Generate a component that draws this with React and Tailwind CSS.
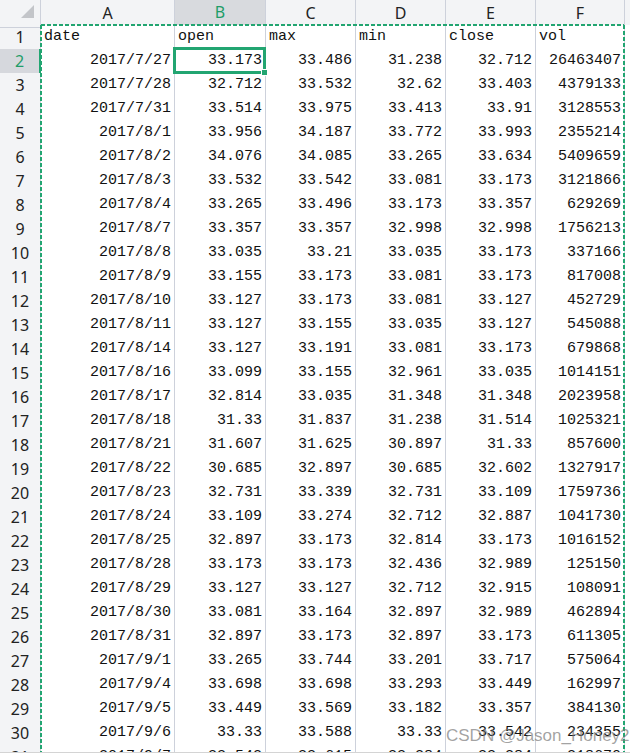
import React from "react";

const columns = ["A", "B", "C", "D", "E", "F"];

const header = ["date", "open", "max", "min", "close", "vol"];

const rows = [
  ["2017/7/27", "33.173", "33.486", "31.238", "32.712", "26463407"],
  ["2017/7/28", "32.712", "33.532", "32.62", "33.403", "4379133"],
  ["2017/7/31", "33.514", "33.975", "33.413", "33.91", "3128553"],
  ["2017/8/1", "33.956", "34.187", "33.772", "33.993", "2355214"],
  ["2017/8/2", "34.076", "34.085", "33.265", "33.634", "5409659"],
  ["2017/8/3", "33.532", "33.542", "33.081", "33.173", "3121866"],
  ["2017/8/4", "33.265", "33.496", "33.173", "33.357", "629269"],
  ["2017/8/7", "33.357", "33.357", "32.998", "32.998", "1756213"],
  ["2017/8/8", "33.035", "33.21", "33.035", "33.173", "337166"],
  ["2017/8/9", "33.155", "33.173", "33.081", "33.173", "817008"],
  ["2017/8/10", "33.127", "33.173", "33.081", "33.127", "452729"],
  ["2017/8/11", "33.127", "33.155", "33.035", "33.127", "545088"],
  ["2017/8/14", "33.127", "33.191", "33.081", "33.173", "679868"],
  ["2017/8/16", "33.099", "33.155", "32.961", "33.035", "1014151"],
  ["2017/8/17", "32.814", "33.035", "31.348", "31.348", "2023958"],
  ["2017/8/18", "31.33", "31.837", "31.238", "31.514", "1025321"],
  ["2017/8/21", "31.607", "31.625", "30.897", "31.33", "857600"],
  ["2017/8/22", "30.685", "32.897", "30.685", "32.602", "1327917"],
  ["2017/8/23", "32.731", "33.339", "32.731", "33.109", "1759736"],
  ["2017/8/24", "33.109", "33.274", "32.712", "32.887", "1041730"],
  ["2017/8/25", "32.897", "33.173", "32.814", "33.173", "1016152"],
  ["2017/8/28", "33.173", "33.173", "32.436", "32.989", "125150"],
  ["2017/8/29", "33.127", "33.127", "32.712", "32.915", "108091"],
  ["2017/8/30", "33.081", "33.164", "32.897", "32.989", "462894"],
  ["2017/8/31", "32.897", "33.173", "32.897", "33.173", "611305"],
  ["2017/9/1", "33.265", "33.744", "33.201", "33.717", "575064"],
  ["2017/9/4", "33.698", "33.698", "33.293", "33.449", "162997"],
  ["2017/9/5", "33.449", "33.569", "33.182", "33.357", "384130"],
  ["2017/9/6", "33.33", "33.588", "33.33", "33.542", "234355"],
  ["2017/9/7", "33.542", "33.615", "33.284", "33.284", "218670"],
];

const gridCols =
  "grid grid-cols-[41px_134px_91px_90px_90px_90px_89px_1fr]";

const headFont = { fontFamily: '"Noto Sans", "Liberation Sans", sans-serif' };
const cellFont = { fontFamily: '"Liberation Mono", monospace' };

function ColumnHeader() {
  return (
    <div className={`${gridCols} h-[25px]`} style={headFont}>
      <div className="relative border-r border-b border-[#cdd1db] bg-[#f3f4f6]">
        {/* select-all corner */}
        <svg
          className="absolute left-[21px] top-[5px]"
          width="13"
          height="13"
          viewBox="0 0 13 13"
        >
          <polygon points="13,0 13,13 0,13" fill="#c3c5c9" />
        </svg>
      </div>
      {columns.map((col) => (
        <div
          key={col}
          className={
            col === "B"
              ? "flex items-center justify-center pb-[2px] text-[16px] border-r border-[#cdd1db] border-b-2 border-b-[#22a571] bg-[#d8dade] text-[#1f9d68]"
              : "flex items-center justify-center pb-[2px] text-[16px] border-r border-b border-[#cdd1db] bg-[#f3f4f6] text-[#222]"
          }
        >
          {col}
        </div>
      ))}
      <div className="border-b border-[#cdd1db] bg-[#f3f4f6]" />
    </div>
  );
}

function Row({ index, values, isHeader }) {
  const active = index === 2;

  return (
    <div className={`${gridCols} h-[24px]`}>
      <div
        style={headFont}
        className={
          active
            ? "flex items-center justify-center text-[16px] border-b border-[#cdd1db] border-r-2 border-r-[#22a571] bg-[#d6d8dd] text-[#1f9d68]"
            : "flex items-center justify-center text-[16px] border-r border-b border-[#cdd1db] bg-[#f3f4f6] text-[#222]"
        }
      >
        {index}
      </div>
      {values.map((v, i) => (
        <div
          key={i}
          style={cellFont}
          className={`relative flex items-center overflow-visible whitespace-nowrap border-r border-b border-[#cdd1db] bg-white pt-px text-[15px] text-[#111] ${
            isHeader ? "justify-start pl-[3px]" : "justify-end pr-[3px]"
          }`}
        >
          {v}
          {active && i === 1 && (
            <div className="absolute -left-[2px] -top-[2px] -right-[1px] -bottom-[1px] z-10 border-[3px] border-[#22a571]">
              <div className="absolute -right-[4px] -bottom-[4px] h-[5px] w-[5px] bg-[#22a571] ring-1 ring-white" />
            </div>
          )}
        </div>
      ))}
      <div className="border-b border-[#cdd1db] bg-white" />
    </div>
  );
}

export default function App() {
  return (
    <div className="flex h-[756px] w-[630px] flex-col overflow-hidden bg-white">
      <div className="relative h-[752px] overflow-hidden">
        <ColumnHeader />
        <Row index={1} values={header} isHeader />
        {rows.map((r, i) => (
          <Row key={i} index={i + 2} values={r} />
        ))}

        {/* copy range outline */}
        <svg
          className="pointer-events-none absolute left-0 top-0 z-20"
          width="630"
          height="752"
        >
          <g stroke="#22a571" strokeWidth="2" strokeDasharray="4 2" fill="none">
            <line x1="41" y1="25" x2="624" y2="25" />
            <line x1="41" y1="25" x2="41" y2="752" />
            <line x1="624" y1="25" x2="624" y2="752" />
          </g>
        </svg>

        <div
          className="pointer-events-none absolute left-[446px] top-[723px] z-30 whitespace-nowrap text-[17px] text-[#7a7a7a]/70"
          style={{ fontFamily: '"Liberation Sans", Arial, sans-serif' }}
        >
          CSDN @Jason_Honey2
        </div>
      </div>
      <div className="flex-1 border-t border-[#d4d4d4] bg-white" />
    </div>
  );
}
